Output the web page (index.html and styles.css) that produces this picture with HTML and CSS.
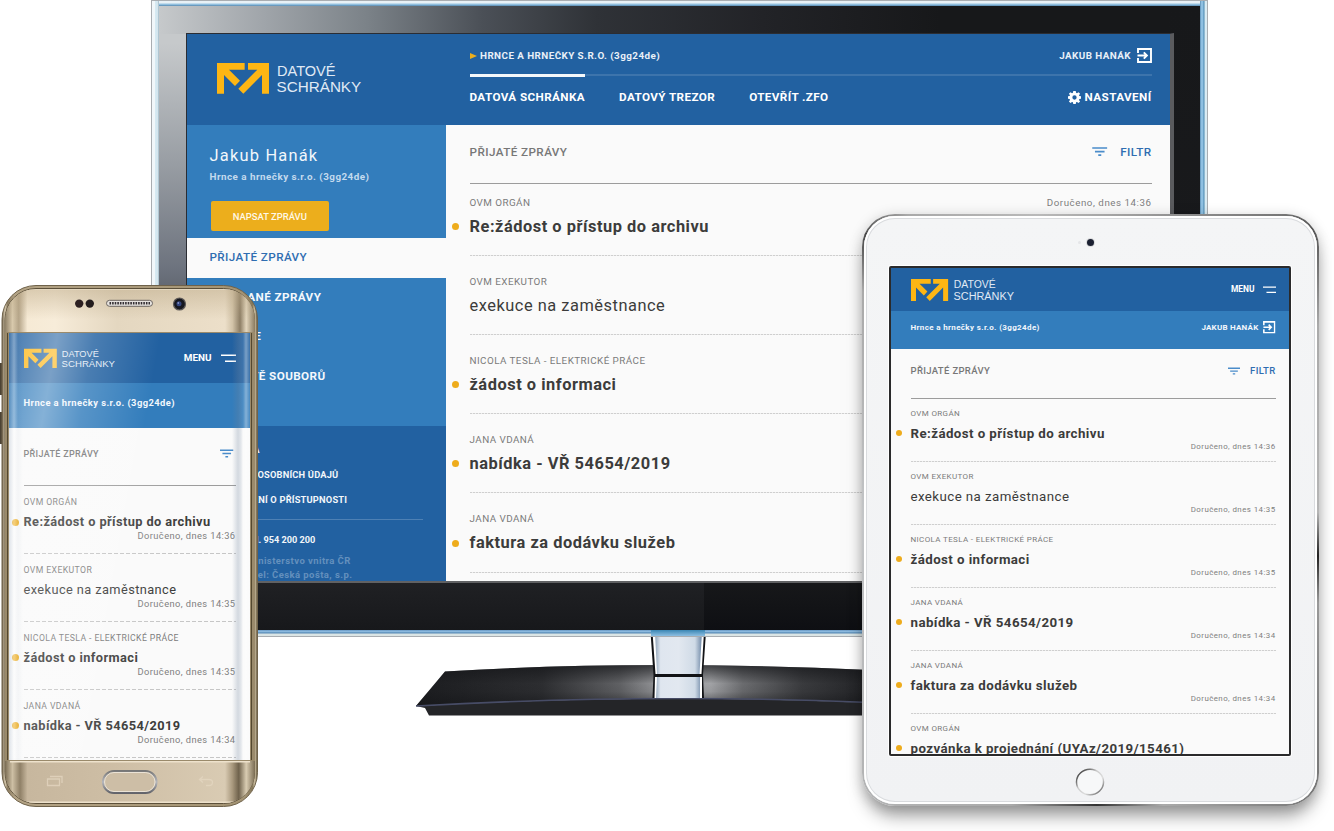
FILE: index.html
```html
<!DOCTYPE html>
<html lang="cs">
<head>
<meta charset="utf-8">
<title>Datové schránky</title>
<link rel="stylesheet" href="styles.css">
</head>
<body>
<svg class="defs" width="0" height="0" aria-hidden="true">
  <symbol id="logo" viewBox="0 0 145 36" overflow="visible">
    <path fill="#fdb614" transform="translate(0 4) scale(.3333)" d="M0 0H83V20H36L69 53 54 69 21 36V92H0ZM93 0H156V92H135V36L79 92 64 77 121 20H93Z"/>
    <g class="logo-text" fill="#e0eaf5">
      <text x="60" y="16.5" textLength="58.5" lengthAdjust="spacingAndGlyphs">DATOVÉ</text>
      <text x="59.6" y="33" textLength="84.6" lengthAdjust="spacingAndGlyphs">SCHRÁNKY</text>
    </g>
  </symbol>
  <symbol id="exit" viewBox="0 0 15 15">
    <path fill="none" stroke="#fff" stroke-width="1.9" d="M1 5V1H14V14H1V10M.5 7.5H9.5M6.8 4.4 9.9 7.5 6.8 10.6"/>
  </symbol>
  <symbol id="filter" viewBox="0 0 15 9">
    <path fill="none" stroke="#4a8cca" stroke-width="1.7" d="M0 1H15M2.7 4.6H12.3M6 8.1H9"/>
  </symbol>
  <symbol id="menu" viewBox="0 0 15 8">
    <path fill="none" stroke="#fff" stroke-width="1.4" d="M0 1H15M4 7H15"/>
  </symbol>
  <symbol id="gear" viewBox="0 0 24 24">
    <path fill="#fff" fill-rule="evenodd" d="M9.7 0h4.6l.6 3.3 1.7.7L19.400 2.100 22.300 5 20.300 7.700l.7 1.700 3 .5v4.400l-3 .5-.7 1.700 2 2.700-2.900 2.900-2.800-1.900-1.700.7-.6 3.100H9.700l-.6-3.100-1.700-.7-2.800 1.900L1.700 19.200l2-2.700L3 14.800l-3-.5V9.900l3-.5.7-1.700L1.700 5l2.900-2.900L7.400 4l1.700-.7ZM12 8a4 4 0 1 0 0 8 4 4 0 0 0 0-8Z"/>
  </symbol>
</svg>

<main class="scene">
  <section class="device tv">
    <svg class="stand" viewBox="410 628 460 92" width="460" height="92">
      <defs>
        <linearGradient id="base" x1="415" x2="870" y1="0" y2="0" gradientUnits="userSpaceOnUse">
          <stop offset="0" stop-color="#1c1d20"/><stop offset=".28" stop-color="#303134"/><stop offset=".45" stop-color="#6a6b6e"/><stop offset=".53" stop-color="#a2a3a6"/><stop offset=".65" stop-color="#b4b5b8"/><stop offset=".72" stop-color="#77787b"/><stop offset=".85" stop-color="#3f4043"/><stop offset="1" stop-color="#232427"/>
        </linearGradient>
        <linearGradient id="baseShade" x1="0" x2="0" y1="0" y2="1">
          <stop offset="0" stop-color="#141518" stop-opacity=".75"/><stop offset=".45" stop-color="#141518" stop-opacity=".12"/><stop offset=".65" stop-color="#141518" stop-opacity=".18"/><stop offset="1" stop-color="#141518" stop-opacity=".65"/>
        </linearGradient>
        <linearGradient id="neck" x1="0" x2="1" y1="0" y2="0">
          <stop offset="0" stop-color="#8fa3b8"/><stop offset=".12" stop-color="#dfe6ef"/><stop offset=".5" stop-color="#e2e8f0"/><stop offset=".85" stop-color="#cfdae6"/><stop offset="1" stop-color="#6f88a6"/>
        </linearGradient>
      </defs>
      <path fill="url(#base)" d="M445 671.500Q640 659.500 870 670V703.500Q650 693 416 706Z"/>
      <path fill="url(#baseShade)" d="M445 671.500Q640 659.500 870 670V703.500Q650 693 416 706Z"/>
      <path fill="#242528" d="M416 706Q650 693 870 703V715.500H429L425 708Z"/>
      <path fill="none" stroke="#474c66" stroke-width="1.600" d="M416 706Q650 693 870 702.500"/>
      <path fill="#121316" d="M650.500 632H706L703 675 704 698H652.500L653.500 675Z"/>
      <path fill="#fff" d="M652.500 632H704L701.500 674H655.500ZM655 677H702V698H654.500Z"/>
      <path fill="url(#neck)" d="M655 632H702L699.500 674H657ZM657 677H700V698H656Z"/>
    </svg>
    <div class="tv-frame">
      <div class="tv-bezel">
        <div class="tv-screen">
          <header class="tv-header">
            <svg class="tv-logo"><use href="#logo"/></svg>
            <div class="tv-top">
              <div class="account">
                <span class="row"><svg class="arrow" viewBox="0 0 7 6"><path fill="#ecae1c" d="M0 0 7 3 0 6Z"/></svg><span class="company">HRNCE A HRNEČKY S.R.O. (3gg24de)</span></span>
                <span class="row"><span class="user">JAKUB HANÁK</span><svg class="exit"><use href="#exit"/></svg></span>
              </div>
              <nav class="topnav">
                <a class="active">DATOVÁ SCHRÁNKA</a><a>DATOVÝ TREZOR</a><a>OTEVŘÍT .ZFO</a>
                <a class="settings"><svg class="gear"><use href="#gear"/></svg>NASTAVENÍ</a>
              </nav>
            </div>
          </header>
          <div class="tv-body">
            <aside class="sidebar">
              <div class="profile">
                <div class="name">Jakub Hanák</div>
                <div class="firm">Hrnce a hrnečky s.r.o. (3gg24de)</div>
                <button class="compose">NAPSAT ZPRÁVU</button>
              </div>
              <nav class="folders">
                <a class="current">PŘIJATÉ ZPRÁVY</a><a>ODESLANÉ ZPRÁVY</a><a>ARCHIVE</a><a>ÚLOŽIŠTĚ SOUBORŮ</a>
              </nav>
              <footer class="side-footer">
                <a>NÁPOVĚDA</a><a>OCHRANA OSOBNÍCH ÚDAJŮ</a><a>PROHLÁŠENÍ O PŘÍSTUPNOSTI</a>
                <div class="phone-line">Infolinka tel. 954 200 200</div>
                <div class="legal">© 2019 Ministerstvo vnitra ČR</div>
                <div class="legal operator">Provozovatel: Česká pošta, s.p.</div>
              </footer>
            </aside>
            <div class="inbox tv-inbox">
              <div class="inbox-head"><span class="heading">PŘIJATÉ ZPRÁVY</span><span class="filter"><svg><use href="#filter"/></svg>FILTR</span></div>
              <article class="msg unread"><div class="from">OVM ORGÁN</div><div class="subject">Re:žádost o přístup do archivu</div><time>Doručeno, dnes 14:36</time></article>
              <article class="msg"><div class="from">OVM EXEKUTOR</div><div class="subject">exekuce na zaměstnance</div></article>
              <article class="msg unread"><div class="from">NICOLA TESLA - ELEKTRICKÉ PRÁCE</div><div class="subject">žádost o informaci</div></article>
              <article class="msg unread"><div class="from">JANA VDANÁ</div><div class="subject">nabídka - VŘ 54654/2019</div></article>
              <article class="msg unread"><div class="from">JANA VDANÁ</div><div class="subject">faktura za dodávku služeb</div></article>
            </div>
          </div>
        </div>
      </div>
    </div>
  </section>

  <section class="device tablet">
    <span class="tablet-sensor"></span><span class="tablet-camera"></span>
    <div class="tablet-screen">
      <header class="m-header"><svg class="m-logo"><use href="#logo"/></svg><span class="menu">MENU<svg><use href="#menu"/></svg></span></header>
      <div class="m-sub"><span>Hrnce a hrnečky s.r.o. (3gg24de)</span><span class="row"><span class="user">JAKUB HANÁK</span><svg class="exit"><use href="#exit"/></svg></span></div>
      <div class="inbox tablet-inbox">
        <div class="inbox-head"><span class="heading">PŘIJATÉ ZPRÁVY</span><span class="filter"><svg><use href="#filter"/></svg>FILTR</span></div>
        <article class="msg unread"><div class="from">OVM ORGÁN</div><div class="subject">Re:žádost o přístup do archivu</div><time>Doručeno, dnes 14:36</time></article>
        <article class="msg"><div class="from">OVM EXEKUTOR</div><div class="subject">exekuce na zaměstnance</div><time>Doručeno, dnes 14:35</time></article>
        <article class="msg unread"><div class="from">NICOLA TESLA - ELEKTRICKÉ PRÁCE</div><div class="subject">žádost o informaci</div><time>Doručeno, dnes 14:35</time></article>
        <article class="msg unread"><div class="from">JANA VDANÁ</div><div class="subject">nabídka - VŘ 54654/2019</div><time>Doručeno, dnes 14:34</time></article>
        <article class="msg unread"><div class="from">JANA VDANÁ</div><div class="subject">faktura za dodávku služeb</div><time>Doručeno, dnes 14:34</time></article>
        <article class="msg unread"><div class="from">OVM ORGÁN</div><div class="subject">pozvánka k projednání (UYAz/2019/15461)</div></article>
      </div>
    </div>
    <svg class="tablet-home" viewBox="0 0 30 28">
      <defs><linearGradient id="ring" x1="0" x2="1" y1="0" y2="1"><stop offset="0" stop-color="#222"/><stop offset=".25" stop-color="#777"/><stop offset=".4" stop-color="#ccc"/><stop offset=".65" stop-color="#ddd"/><stop offset="1" stop-color="#444"/></linearGradient></defs>
      <ellipse cx="15" cy="14" rx="13.500" ry="12.700" fill="#f7f8f9" stroke="url(#ring)" stroke-width="1.500"/>
    </svg>
  </section>

  <section class="device phone">
    <svg class="phone-body" viewBox="0 280 262 532" width="262" height="532">
      <defs>
        <linearGradient id="rim" x1="0" x2="1" y1="0" y2="0"><stop offset="0" stop-color="#6d5f49"/><stop offset=".012" stop-color="#d8cbb0"/><stop offset=".022" stop-color="#8a7b60"/><stop offset=".05" stop-color="#b3a385"/><stop offset=".95" stop-color="#a39373"/><stop offset=".98" stop-color="#857759"/><stop offset=".99" stop-color="#cfc1a3"/><stop offset="1" stop-color="#54482f"/></linearGradient>
        <linearGradient id="gold" x1="0" x2="1" y1="0" y2="0"><stop offset="0" stop-color="#8f8168"/><stop offset=".03" stop-color="#d8c9ac"/><stop offset=".055" stop-color="#b5a589"/><stop offset=".09" stop-color="#f6ead5"/><stop offset=".2" stop-color="#f7ecd9"/><stop offset=".45" stop-color="#e4d7c0"/><stop offset=".88" stop-color="#ecdfc9"/><stop offset=".91" stop-color="#d2c3a8"/><stop offset=".94" stop-color="#8d7e65"/><stop offset=".965" stop-color="#e3d6bd"/><stop offset="1" stop-color="#8a7b60"/></linearGradient>
        <linearGradient id="gold2" x1="0" x2="1" y1="0" y2="0"><stop offset="0" stop-color="#7a6c53"/><stop offset=".03" stop-color="#cdbfa4"/><stop offset=".06" stop-color="#8f8067"/><stop offset=".09" stop-color="#c7b79e"/><stop offset=".4" stop-color="#cdbda4"/><stop offset=".88" stop-color="#d9cbb3"/><stop offset=".91" stop-color="#a8987d"/><stop offset=".935" stop-color="#6f624c"/><stop offset=".965" stop-color="#d9ccb2"/><stop offset="1" stop-color="#7a6c53"/></linearGradient>
        <linearGradient id="goldFade" x1="0" x2="0" y1="0" y2="1"><stop offset="0" stop-color="#b9a684" stop-opacity=".45"/><stop offset=".7" stop-color="#b9a684" stop-opacity="0"/></linearGradient>
        <linearGradient id="steel" x1="0" x2="0" y1="0" y2="1"><stop offset="0" stop-color="#777"/><stop offset=".5" stop-color="#b5b7bd"/><stop offset="1" stop-color="#62636a"/></linearGradient>
        <clipPath id="shell"><rect x="5" y="289" width="250" height="514" rx="31"/></clipPath>
      </defs>
      <path fill="#4c4334" d="M0 363H3V395H0ZM0 412H3V444H0ZM255 446H258V480H255Z"/>
      <rect x="2" y="285.500" width="255.500" height="521" rx="34" fill="url(#rim)" stroke="#6f624a" stroke-width="1"/>
      <rect x="5" y="288.500" width="249.500" height="515" rx="31" fill="#d9cbb1" stroke="#5c503a" stroke-width="1"/>
      <g clip-path="url(#shell)">
        <path fill="url(#gold)" d="M5 290H255V332H5Z"/>
        <path fill="url(#goldFade)" d="M5 290H255V332H5Z"/>
        <path fill="#9a8a6b" d="M5 332H255V762H5Z"/>
        <path fill="url(#gold2)" d="M5 761H255V803H5Z"/>
        <path fill="#eee2cc" d="M20 287H240V289.500H20ZM10 761H250V762.500H10ZM20 801.500H240V803H20Z"/>
      </g>
      <path fill="none" stroke="#54482f" d="M7.500 760V333M251.500 333V760"/>
      <circle cx="79.200" cy="303.600" r="4.200" fill="#2c1f20"/><circle cx="89.800" cy="303.600" r="4.200" fill="#231c1d"/>
      <rect x="106.500" y="300.300" width="46" height="6" rx="3" fill="#e7e3df" stroke="#6c6661"/>
      <path stroke="#332e33" stroke-width="2.400" stroke-dasharray="1.600 1" d="M109.500 303.300H150"/>
      <circle cx="179.500" cy="304" r="6" fill="#17181f" stroke="#5e5a58" stroke-width="1.200"/><circle cx="179" cy="303.700" r="2.500" fill="#34457e"/><circle cx="178.300" cy="303" r=".8" fill="#a9b7e6"/>
      <rect x="103" y="771" width="53.500" height="22" rx="11" fill="#cdbea6" stroke="url(#steel)" stroke-width="2"/><rect x="104.500" y="772.500" width="50.500" height="19" rx="9.500" fill="none" stroke="#f2ece2" stroke-width=".8"/>
      <path fill="none" stroke="#e4d7c1" stroke-width="1.300" opacity=".75" d="M47.500 779H59.500V785.500H47.500ZM50 776.500H62V783M203 776.500 199.500 779.500 203 782.500M200 779.500H209Q212.500 779.500 212.500 782.500T209 785.500H206"/>
    </svg>
    <div class="phone-screen">
      <header class="m-header"><svg class="m-logo"><use href="#logo"/></svg><span class="menu">MENU<svg><use href="#menu"/></svg></span></header>
      <div class="m-sub"><span>Hrnce a hrnečky s.r.o. (3gg24de)</span></div>
      <div class="inbox phone-inbox">
        <div class="inbox-head"><span class="heading">PŘIJATÉ ZPRÁVY</span><span class="filter"><svg><use href="#filter"/></svg></span></div>
        <article class="msg unread"><div class="from">OVM ORGÁN</div><div class="subject">Re:žádost o přístup do archivu</div><time>Doručeno, dnes 14:36</time></article>
        <article class="msg"><div class="from">OVM EXEKUTOR</div><div class="subject">exekuce na zaměstnance</div><time>Doručeno, dnes 14:35</time></article>
        <article class="msg unread"><div class="from">NICOLA TESLA - ELEKTRICKÉ PRÁCE</div><div class="subject">žádost o informaci</div><time>Doručeno, dnes 14:35</time></article>
        <article class="msg unread"><div class="from">JANA VDANÁ</div><div class="subject">nabídka - VŘ 54654/2019</div><time>Doručeno, dnes 14:34</time></article>
      </div>
      <div class="gloss"></div>
    </div>
  </section>
</main>
</body>
</html>
```
FILE: styles.css
```css
* { box-sizing: border-box; }
body { margin: 0; background: #fff; font-family: Roboto, "Liberation Sans", sans-serif; overflow: hidden; }
.defs { position: absolute; }
.logo-text { font: 15.5px "Liberation Sans", sans-serif; }
.tv-logo, .m-logo { overflow: visible; }
.scene { position: relative; width: 1334px; height: 831px; overflow: hidden; }
.device { position: absolute; }
.row { display: flex; align-items: center; }

/* ---------- television ---------- */
.tv { left: 150.500px; top: 0; width: 1057px; height: 720px; }
.stand { position: absolute; left: 259.500px; top: 628px; }
.tv-frame {
  position: relative; width: 1057px; height: 637px; padding: 5px 7px 6px;
  border: 1px solid #a9adb1;
  background:
    linear-gradient(#3a86b3, #8ebfe2) 499px 629px / 54px 6px no-repeat,
    linear-gradient(90deg, #f1f7fa 0 3px, #bcdcea 4px, #e9f4f9 5px, #9cb6c4 7px, transparent 7px) left / 7px 100% no-repeat,
    linear-gradient(270deg, #d9ecf4 0 2px, #4886ad 3px, #8ec0e2 4px 6px, #4c7ea4 7px, transparent 7px) right / 7px 100% no-repeat,
    linear-gradient(#e8f1f6 0 2px, #9ac6e2 3px, #86b6d9 4px, #4d7fa5 5px) top / 100% 5px no-repeat,
    linear-gradient(0deg, #dbe5e5 0 2px, #5689b5 3px, #9dc9ec 5px, #4c7eae 6px) bottom / 100% 6px no-repeat;
}
.tv-bezel {
  height: 624px; padding: 27px 28px 0 27.500px;
  background:
    linear-gradient(#202124, #17181b) 75px 575px / 470px 50px no-repeat,
    linear-gradient(#17181a, #0e0f13) 545px 575px / 500px 50px no-repeat,
    linear-gradient(#17181a, #1b1c1f) right / 32px 100% no-repeat,
    linear-gradient(90deg, #c6c9cb 0, #a0a5aa 10%, #7b8288 20%, #4b5057 31%, #2f3237 42%, #222327 58%, #17181a 75%) top / 100% 28px no-repeat,
    linear-gradient(#c6c9cb 6%, #999ea4 25%, #6d737e 42%, #4b5059 52%, #2b2d33 75%) left / 75px 100% no-repeat;
}
.tv-screen {
  width: 988px; height: 550px; background: #fafafa; overflow: hidden;
  border: solid #2b2d33; border-width: 1px 4px 2px 1px; border-right-color: #5a5b5e; border-bottom-color: #606163;
}
.tv-header { display: flex; height: 91px; background: #2261a1; }
.tv-logo { width: 145px; height: 36px; margin: 25px 107px 0 30px; flex: none; }
.tv-top { width: 682px; margin-left: .5px; }
.account { display: flex; justify-content: space-between; height: 42px; padding-top: 3px; border-bottom: 2px solid #3d74ac; font-size: 9.850px; font-weight: 700; letter-spacing: .044em; color: #e9f0f8; }
.arrow { width: 7px; height: 6px; margin-right: 3.500px; }
.exit { width: 15px; height: 15px; margin-left: 5.500px; }
.topnav { display: flex; gap: 34px; font-size: 11.700px; line-height: 14px; font-weight: 700; letter-spacing: .034em; color: #fff; }
.topnav a { padding-top: 14px; white-space: nowrap; }
.topnav .active { margin-top: -2px; padding-top: 13px; border-top: 3px solid #f5f8fb; }
.topnav .settings { margin-left: auto; display: flex; align-items: center; }
.gear { width: 13px; height: 13px; margin-right: 4px; }
.tv-body { display: flex; height: 457px; }
.sidebar { width: 258.500px; flex: none; background: #337dbc; color: #fff; }
.profile { height: 113px; padding: 20px 0 0 22.500px; }
.name { font-size: 16.400px; line-height: 22px; letter-spacing: 1.220px; color: #f2f7fb; }
.firm { margin-top: 3px; font-size: 9.850px; line-height: 14px; font-weight: 700; letter-spacing: .048em; color: #c3daee; }
.compose { display: block; margin: 17px 0 0 1px; width: 118.500px; height: 30px; border: 0; border-radius: 2px; background: #ecae1c; color: #fff8e6; font: 500 9.450px Roboto, sans-serif; padding: 0; }
.folders { display: flex; flex-direction: column; height: 188px; font-size: 11.700px; font-weight: 700; letter-spacing: .034em; color: #f4f8fc; }
.folders a { padding-left: 22.500px; height: 39.500px; line-height: 39px; white-space: nowrap; }
.folders .current { background: #fafafa; color: #2f6db1; font-weight: 500; }
.side-footer { height: 156px; background: #2261a1; padding: 11px 23px 0 22.500px; font-size: 9.300px; font-weight: 700; letter-spacing: .02em; white-space: nowrap; color: #f2f6fa; }
.side-footer a { display: block; height: 25.200px; line-height: 25px; }
.phone-line { margin-top: 6px; padding-top: 12px; border-top: 1px solid #4d80b4; line-height: 15px; margin-bottom: 7px; font-size: 9.200px; letter-spacing: 0; }
.legal { font-size: 9.500px; letter-spacing: .045em; line-height: 14px; color: #6490bd; }
.operator { margin-left: -4px; }

/* ---------- message list ---------- */
.inbox { background: #fafafa; color: #3c3c3b; }
.inbox-head { display: flex; justify-content: space-between; align-items: center; border-bottom: 1px solid #9c9c9c; font-weight: 500; letter-spacing: .036em; }
.heading { color: #777; }
.filter { display: flex; align-items: center; color: #2f6db1; }
.msg { position: relative; white-space: nowrap; background: repeating-linear-gradient(90deg, #cfcfcf 0 2px, #eee 2px 3px) bottom / 100% 1px no-repeat; }
.from { color: #7a7a7a; letter-spacing: .045em; }
.subject { letter-spacing: .032em; }
.unread .subject { font-weight: 700; }
.unread::before { content: ""; position: absolute; border-radius: 50%; background: #eeac1c; }
.msg time { color: #7e7e7e; letter-spacing: .055em; }

.tv-inbox { padding: 0 18.500px 0 24px; flex: 1; }
.tv-inbox .inbox-head { height: 59px; padding-bottom: 5px; font-size: 11.700px; }
.tv-inbox .filter svg { width: 15.500px; height: 9px; margin-right: 12.500px; }
.tv-inbox .msg { height: 79.150px; padding-top: 19px; }
.tv-inbox .inbox-head + .msg { height: 72px; padding-top: 11.500px; }
.tv-inbox .from { font-size: 9.850px; line-height: 14px; }
.tv-inbox .subject { font-size: 16.400px; line-height: 20px; margin-top: 7px; }
.tv-inbox time { position: absolute; right: 0; top: 12px; font-size: 9.750px; line-height: 14px; }
.tv-inbox .unread::before { width: 7px; height: 7px; left: -17.500px; bottom: 26px; }

/* ---------- shared mobile header ---------- */
.m-header { display: flex; justify-content: space-between; align-items: center; background: #2261a1; color: #fff; }
.menu { display: flex; align-items: center; font-weight: 700; }
.m-sub { display: flex; justify-content: space-between; align-items: center; background: #337dbc; color: #f2f7fc; font-weight: 700; letter-spacing: .045em; white-space: nowrap; }

/* ---------- tablet ---------- */
.tablet {
  left: 861.500px; top: 214px; width: 457.500px; height: 592px; padding: 50px 26px 0 25.500px;
  border: 2px solid transparent; border-radius: 33px;
  background: linear-gradient(#f4f5f6, #f1f2f4) padding-box,
    conic-gradient(from -39deg at 50% 50%, #555 0, #a9a9a9 2%, #b9b9b9 8%, #777 20%, #555 21.500%, #aaa 25%, #b5b5b5 36%, #222 39%, #999 42%, #777 50%, #aaa 57%, #333 60.500%, #aaa 65%, #c4c6c8 85%, #aaa 98%, #444 100%) border-box;
  box-shadow: 0 14px 18px -4px rgba(0,0,0,.36), 0 2px 14px rgba(0,0,0,.18), inset 0 0 0 2px #fff, inset 0 0 0 3px #d9dbde;
}
.tablet-camera, .tablet-sensor { position: absolute; border-radius: 50%; }
.tablet-camera { left: 223px; top: 23px; width: 7px; height: 7px; background: #1b2031; box-shadow: 0 0 0 1px #d9dadb; }
.tablet-sensor { left: 214px; top: 25px; width: 3px; height: 3px; background: #e5e6e8; }
.tablet-screen { width: 402px; height: 490px; border: 2px solid #2a2a2b; border-radius: 2px; overflow: hidden; background: #fafafa; box-shadow: 0 0 0 1px #fff; }
.tablet .m-header { height: 42.500px; padding: 0 13.500px 0 20px; font-size: 8.400px; }
.tablet .m-logo { width: 103.500px; height: 26px; }
.tablet .menu svg { width: 13px; height: 7.500px; margin-left: 8px; }
.tablet .m-sub { height: 38px; padding: 0 13.500px 4px 19.500px; font-size: 8px; }
.tablet .user { letter-spacing: .03em; }
.tablet .exit { width: 12.500px; height: 12.500px; margin-left: 4.500px; }
.tablet-inbox { padding: 0 13.500px 0 19.500px; }
.tablet-inbox .inbox-head { height: 50.500px; padding-bottom: 5px; font-size: 9.500px; }
.tablet-inbox .filter svg { width: 12px; height: 8px; margin-right: 10px; }
.tablet-inbox .msg { height: 63px; padding-top: 9px; }
.tablet-inbox .from { font-size: 8px; line-height: 12px; }
.tablet-inbox .subject { font-size: 13.300px; line-height: 18px; margin-top: 4.500px; }
.tablet-inbox time { display: block; text-align: right; font-size: 7.900px; line-height: 10px; margin-top: -.5px; }
.tablet-inbox .unread::before { width: 6px; height: 6px; left: -14.500px; top: 31px; }
.tablet-home { position: absolute; left: 211px; top: 552px; width: 30px; height: 28px; }

/* ---------- phone ---------- */
.phone { left: 0; top: 280px; width: 262px; height: 532px; padding: 53px 0 0 9px; }
.phone-body { position: absolute; left: 0; top: 0; }
.phone-screen { position: relative; width: 241px; height: 427px; overflow: hidden; background: #fafafa; }
.phone .m-header { height: 49.500px; padding: 0 14px 0 15px; font-size: 9.900px; }
.phone .m-logo { width: 91.500px; height: 23px; }
.phone .menu svg { width: 15px; height: 8.500px; margin-left: 9.500px; }
.phone .m-sub { height: 45px; padding: 0 0 5px 14.500px; font-size: 9.400px; }
.phone-inbox { padding: 0 14.500px; }
.phone-inbox .inbox-head { height: 58.500px; padding-bottom: 5px; font-size: 9px; }
.phone-inbox .heading { color: #747474; }
.phone-inbox .filter svg { width: 13.500px; height: 9px; margin-right: 2px; }
.phone-inbox .msg { height: 67.900px; padding-top: 10px; background-image: repeating-linear-gradient(90deg, #c6c6c6 0 4px, transparent 4px 6px); }
.phone-inbox .from { font-size: 8.700px; line-height: 12px; }
.phone-inbox .subject { font-size: 12.800px; line-height: 18px; margin-top: 5px; }
.phone-inbox time { display: block; text-align: right; font-size: 9.300px; line-height: 11px; margin-top: -1px; letter-spacing: .045em; }
.phone-inbox .unread::before { width: 7px; height: 7px; left: -11.500px; top: 32.500px; }
.gloss {
  position: absolute; inset: 0;
  background:
    linear-gradient(90deg, transparent 223px, rgba(110,130,155,.28) 229px, rgba(150,165,185,.22) 232px, rgba(255,255,255,.12) 234px, rgba(255,255,255,.4) 237px, rgba(255,255,255,.1) 241px),
    linear-gradient(90deg, rgba(20,60,110,.12), rgba(255,255,255,.3) 5px, rgba(20,60,110,.03) 9px, transparent 14px),
    linear-gradient(100deg, rgba(255,255,255,.16) 0, rgba(255,255,255,.4) 48px, rgba(255,255,255,.18) 85px, transparent 150px) top / 100% 95px no-repeat,
    linear-gradient(100deg, rgba(255,255,255,.2) 0, rgba(255,255,255,.16) 90px, transparent 190px) 0 95px / 100% 330px no-repeat;
}
```
